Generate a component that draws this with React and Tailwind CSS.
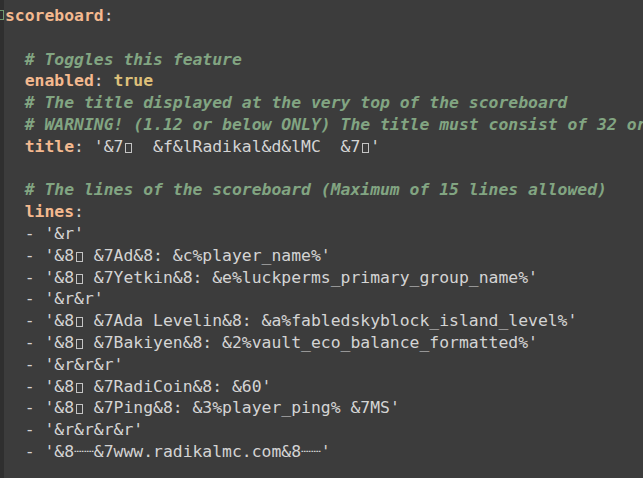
import React from "react";

const Key = ({ children }) => <span className="font-bold text-[#f4b98f]">{children}</span>;
const Colon = () => <span className="text-[#cfcfcf]">: </span>;
const Comment = ({ children }) => (
  <span className="font-bold italic text-[#82a582]">{children}</span>
);

// missing-glyph box as drawn by the editor
const Tofu = () => (
  <span className="inline-block w-[1ch] align-top">
    <span className="ml-[2px] mt-[7px] block h-[10px] w-[7px] border border-[#c4c4c4]" />
  </span>
);

const Item = ({ children }) => (
  <span className="text-[#d4d4d4]">
    {"  - '"}
    {children}
    {"'"}
  </span>
);

const lines = [
  <Key>scoreboard<span className="font-normal text-[#cfcfcf]">:</span></Key>,
  "",
  <>{"  "}<Comment># Toggles this feature</Comment></>,
  <>{"  "}<Key>enabled</Key><Colon /><span className="font-bold text-[#dfc07a]">true</span></>,
  <>{"  "}<Comment># The title displayed at the very top of the scoreboard</Comment></>,
  <>{"  "}<Comment># WARNING! (1.12 or below ONLY) The title must consist of 32 or less characters</Comment></>,
  <>
    {"  "}<Key>title</Key><Colon />
    <span className="text-[#d4d4d4]">
      {"'&7"}<Tofu />{"  &f&lRadikal&d&lMC  &7"}<Tofu />{"'"}
    </span>
  </>,
  "",
  <>{"  "}<Comment># The lines of the scoreboard (Maximum of 15 lines allowed)</Comment></>,
  <>{"  "}<Key>lines</Key><span className="text-[#cfcfcf]">:</span></>,
  <Item>&r</Item>,
  <Item>&8<Tofu /> &7Ad&8: &c%player_name%</Item>,
  <Item>&8<Tofu /> &7Yetkin&8: &e%luckperms_primary_group_name%</Item>,
  <Item>&r&r</Item>,
  <Item>&8<Tofu /> &7Ada Levelin&8: &a%fabledskyblock_island_level%</Item>,
  <Item>&8<Tofu /> &7Bakiyen&8: &2%vault_eco_balance_formatted%</Item>,
  <Item>&r&r&r</Item>,
  <Item>&8<Tofu /> &7RadiCoin&8: &60</Item>,
  <Item>&8<Tofu /> &7Ping&8: &3%player_ping% &7MS</Item>,
  <Item>&r&r&r&r</Item>,
  <Item>&8┈┈&7www.radikalmc.com&8┈┈</Item>,
];

export default function App() {
  return (
    <div className="flex h-[478px] w-[643px] overflow-hidden bg-[#3c3c3c]">
      <div className="flex w-[4px] shrink-0 flex-col bg-[#2f2f2f]">
        <div className="mt-[10px] h-[10px] w-[4px] border border-l-0 border-[#6f9a6f]" />
      </div>
      <div
        className="flex-1 overflow-hidden whitespace-pre pl-[1px] pt-[5px] text-[16.4px] leading-[21.8px]"
        style={{ fontFamily: '"DejaVu Sans Mono", "Liberation Mono", monospace' }}
      >
        {lines.map((line, i) => (
          <div key={i} className="h-[21.8px]">
            {line}
          </div>
        ))}
      </div>
    </div>
  );
}
